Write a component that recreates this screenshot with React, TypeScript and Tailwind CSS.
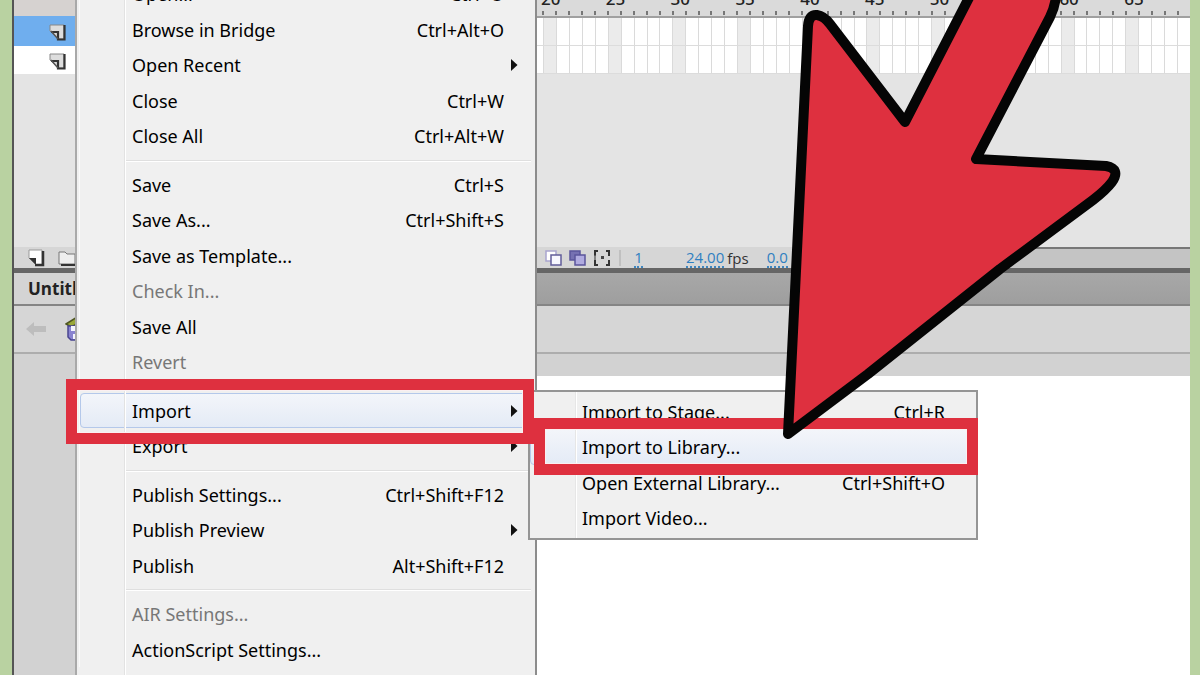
import React from 'react';

type Item = { label: string; keys?: string; disabled?: boolean; sub?: boolean };

const groups: Item[][] = [
  [
    { label: 'Open...', keys: 'Ctrl+O' },
    { label: 'Browse in Bridge', keys: 'Ctrl+Alt+O' },
    { label: 'Open Recent', sub: true },
    { label: 'Close', keys: 'Ctrl+W' },
    { label: 'Close All', keys: 'Ctrl+Alt+W' },
  ],
  [
    { label: 'Save', keys: 'Ctrl+S' },
    { label: 'Save As...', keys: 'Ctrl+Shift+S' },
    { label: 'Save as Template...' },
    { label: 'Check In...', disabled: true },
    { label: 'Save All' },
    { label: 'Revert', disabled: true },
  ],
  [{ label: 'Import', sub: true }, { label: 'Export', sub: true }],
  [
    { label: 'Publish Settings...', keys: 'Ctrl+Shift+F12' },
    { label: 'Publish Preview', sub: true },
    { label: 'Publish', keys: 'Alt+Shift+F12' },
  ],
  [{ label: 'AIR Settings...', disabled: true }, { label: 'ActionScript Settings...' }],
];

const importItems: Item[] = [
  { label: 'Import to Stage...', keys: 'Ctrl+R' },
  { label: 'Import to Library...' },
  { label: 'Open External Library...', keys: 'Ctrl+Shift+O' },
  { label: 'Import Video...' },
];

function MenuRow({ item, tall, active }: { item: Item; tall: boolean; active?: boolean }) {
  return (
    <button
      type="button"
      role="menuitem"
      disabled={item.disabled}
      className={`flex w-full items-center justify-between rounded-sm border pr-[30px] pl-[51px] text-left whitespace-nowrap ${
        tall ? 'h-9' : 'h-[35px]'
      } ${active ? 'border-[#b4c8ea] bg-linear-to-b from-[#f3f5fa] to-[#e4ebf6]' : 'border-transparent'} ${
        item.disabled ? 'text-[#777]' : 'text-black'
      }`}
    >
      <span>{item.label}</span>
      {item.keys && <span>{item.keys}</span>}
      {item.sub && (
        <svg viewBox="0 0 8 12" className="-mr-[14px] h-3 w-2" aria-hidden="true">
          <path d="M1 0 L7.500 6 L1 12 Z" fill="#111" />
        </svg>
      )}
    </button>
  );
}

function FileMenu() {
  let n = 0;
  return (
    <div
      role="menu"
      aria-label="File"
      className="absolute -top-6 left-[75px] w-[462px] border-x-2 border-r-[#8c8c8c] border-l-[#a9a9a9] bg-[#f0f0f0] pb-8 pl-[2px]"
    >
      <div className="border-l border-[#fafafa]">
        {groups.map((group, g) => (
          <div key={g} role="group">
            {g > 0 && (
              <div className="flex h-[13px] items-center pr-1 pl-[46px]">
                <hr className="h-[2px] w-full border-0 border-t border-b border-t-[#dfdfdf] border-b-white" />
              </div>
            )}
            {group.map((item) => {
              const tall = n++ % 2 === 0;
              return <MenuRow key={item.label} item={item} tall={tall} active={item.label === 'Import'} />;
            })}
          </div>
        ))}
      </div>
      <div className="pointer-events-none absolute inset-y-0 left-[47px] w-[2px] border-l border-[#e2e2e2] bg-white" />
    </div>
  );
}

function ImportMenu() {
  return (
    <div
      role="menu"
      aria-label="Import"
      className="absolute top-[390px] left-[528px] w-[450px] border-2 border-[#959595] bg-[#f0f0f0] py-[2px]"
    >
      {importItems.map((item, i) => (
        <MenuRow key={item.label} item={item} tall={i % 2 === 1} active={i === 1} />
      ))}
      <div className="pointer-events-none absolute inset-y-0 left-[45px] w-[2px] border-l border-[#e6e6e6] bg-white" />
    </div>
  );
}

function PageIcon({ white }: { white?: boolean }) {
  return (
    <svg viewBox="0 0 18 18" className="size-[18px]" aria-hidden="true">
      {white ? (
        <>
          <path d="M1 1 H14 V16 H8 L1 9 Z" fill="#fff" stroke="#999" />
          <path d="M15 2 V16 H7" fill="none" stroke="#333" strokeWidth="2.500" />
          <path d="M1 9 H8 V16 Z" fill="#333" />
        </>
      ) : (
        <>
          <path d="M1 1 H15 V15 H9 L1 7 Z" fill="#ddd" stroke="#888" />
          <path d="M15.500 1 V15.500 H9 V8 H2" fill="none" stroke="#333" strokeWidth="2.200" />
          <path d="M2 7 L9 15" stroke="#555" strokeWidth="1.500" />
        </>
      )}
    </svg>
  );
}

const frames = Array.from({ length: 50 }, (_, i) => i + 20);

function Timeline() {
  return (
    <div className="min-w-0 flex-1 bg-[#e4e4e4]">
      <div className="grid h-[18px] grid-cols-[repeat(50,minmax(0,1fr))] border-b-2 border-[#a0a0a0] bg-[#dadada] pl-[5px]">
        {frames.map((f) => (
          <div key={f} className="flex h-[15px] items-end">
            <span className="h-1 w-[2px] shrink-0 bg-[#777]" />
            {f % 5 === 0 && (
              <span className="-ml-[3px] h-[26px] w-5 shrink-0 text-[17px] leading-5 font-medium text-[#222]">{f}</span>
            )}
          </div>
        ))}
      </div>
      {[0, 1].map((row) => (
        <div
          key={row}
          className="grid h-7 grid-cols-[repeat(50,minmax(0,1fr))] border-b border-[#dcdcdc] bg-white pl-[6px]"
        >
          {frames.map((f) => (
            <span key={f} className={`border-l border-[#dadada] ${f % 5 === 0 ? 'bg-[#ebebeb]' : 'bg-white'}`} />
          ))}
        </div>
      ))}
    </div>
  );
}

function OnionIcons() {
  return (
    <svg viewBox="0 0 80 20" className="h-5 w-20" aria-hidden="true">
      <g strokeWidth="1.500">
        <path d="M2 3 H12 V13 H2 Z" fill="#fff" stroke="#a9a5cf" />
        <path d="M7 7 H17 V17 H7 Z" fill="#f7f7ff" stroke="#615d9b" />
        <path d="M26 3 H36 V12 H26 Z" fill="#7671b2" stroke="#5b569c" />
        <path d="M31 7 H41 V17 H31 Z" fill="#b0abe0" stroke="#5b569c" />
      </g>
      <path d="M54 3 H51 V8 M51 12 V17 H54 M62 3 H65 V8 M65 12 V17 H62" fill="none" stroke="#333" strokeWidth="2" />
      <path d="M51 7 V12" stroke="#666" strokeWidth="1.500" />
      <rect x="57" y="8" width="3" height="3" fill="#444" />
      <path d="M76 2 V18" stroke="#aaa" />
    </svg>
  );
}

function Arrow() {
  return (
    <svg
      viewBox="770 -20 360 470"
      className="pointer-events-none absolute -top-5 left-[770px] h-[470px] w-[360px]"
      aria-hidden="true"
    >
      <path
        d="M788 434 L808 26 Q809 14 817 15 Q824 16 830 24 L905 122 L974 -12 L1057 -12 Q1056 5 1050 17 L976 159 L1106 166 Q1121 169 1112 182 Q1106 190 1093 200 L1000 269 L868 374 Z"
        fill="#de303f"
        stroke="#050505"
        strokeWidth="10"
        strokeLinejoin="round"
      />
    </svg>
  );
}

export default function App() {
  return (
    <div className="relative flex h-screen overflow-hidden bg-[#b9d2a1] pr-[10px] pl-3 font-['Noto_Sans','Open_Sans',sans-serif] text-[18px] leading-6">
      <main className="flex min-w-0 flex-1 flex-col border-l-2 border-[#555] bg-white">
        <section className="flex h-[247px] shrink-0">
          <div className="w-[523px] shrink-0 bg-[#e4e4e4]">
            <div className="h-4 bg-[#d6d2d0]" />
            <div className="flex h-[30px] items-center bg-[#6faeee] pt-1 pl-[35px]">
              <PageIcon />
            </div>
            <div className="flex h-7 items-center bg-white pt-1 pl-[35px]">
              <PageIcon />
            </div>
          </div>
          <Timeline />
        </section>

        <section className="flex h-[21px] shrink-0 items-center bg-[#d6d6d6] text-[15px] leading-5">
          <div className="flex w-[523px] shrink-0 gap-3 pl-[14px]">
            <PageIcon white />
            <svg viewBox="0 0 20 18" className="h-[18px] w-5" aria-hidden="true">
              <path d="M1 3 H7 L9 5 H17 V15 H1 Z" fill="#eee" stroke="#777" />
              <path d="M18 6 V16 H3" fill="none" stroke="#333" strokeWidth="2" />
            </svg>
          </div>
          <div className="flex shrink-0 items-center pl-[7px] font-['Open_Sans',sans-serif]">
            <OnionIcons />
            <a href="#frame" className="ml-[10px] w-[9px] border-b-2 border-dotted border-[#3f86bf] text-center leading-[18px] text-[#2f7fc1]">
              1
            </a>
            <a href="#rate" className="ml-[43px] border-b-2 border-dotted border-[#3f86bf] leading-[18px] text-[#2f7fc1]">
              24.00
            </a>
            <span className="ml-[3px] text-[#333]">fps</span>
            <a href="#time" className="ml-[18px] border-b-2 border-dotted border-[#3f86bf] leading-[18px] text-[#2f7fc1]">
              0.0
            </a>
          </div>
          <div className="ml-10 h-full flex-1 border-t-2 border-[#777] bg-[#c4c4c4]" />
        </section>
        <div className="h-[5px] shrink-0 bg-[#666]" />

        <section className="flex h-[33px] shrink-0 border-b-2 border-[#858585] bg-linear-to-b from-[#a8a8a8] to-[#9e9e9e]">
          <h1 className="flex w-[480px] items-center bg-[#d4d4d4] pl-[14px] font-['Open_Sans',sans-serif] text-[17px] font-bold text-[#222]">
            Untitled-1
          </h1>
        </section>
        <section className="flex h-[48px] shrink-0 items-center gap-[18px] border-b-2 border-[#adadad] bg-[#d6d6d6] pl-[11px]">
          <svg viewBox="0 0 22 16" className="h-4 w-[22px]" aria-hidden="true">
            <path d="M1 8 L9 1 V5 H21 V11 H9 V15 Z" fill="#bdbdbd" />
          </svg>
          <svg viewBox="0 0 22 26" className="h-[26px] w-[22px]" aria-hidden="true">
            <path d="M1 8 L12 1 L20 4 L6 11 Z" fill="#9aa83a" stroke="#4e5620" strokeWidth="1.500" />
            <path d="M3 10 H20 V24 H6 L3 21 Z" fill="#8a84d0" stroke="#4a4590" strokeWidth="1.500" />
            <path d="M6 10 H16 V15 H6 Z M8 18 H16 V23 H8 Z" fill="#f4f4ff" />
          </svg>
        </section>
        <section className="flex min-h-0 flex-1 bg-[#d2d2d2]">
          <div className="w-[300px] shrink-0" />
          <div className="mt-[22px] flex-1 bg-white" />
        </section>
      </main>

      <FileMenu />
      <ImportMenu />
      <div className="pointer-events-none absolute top-[379px] left-[66px] h-[65px] w-[468px] border-[11px] border-[#de303f] inset-shadow-[0_0_0_1px_#fbeff1]" />
      <div className="pointer-events-none absolute top-[418px] left-[534px] h-[57px] w-[444px] border-[11px] border-[#de303f] inset-shadow-[0_0_0_1px_#fbeff1]" />
      <Arrow />
    </div>
  );
}
